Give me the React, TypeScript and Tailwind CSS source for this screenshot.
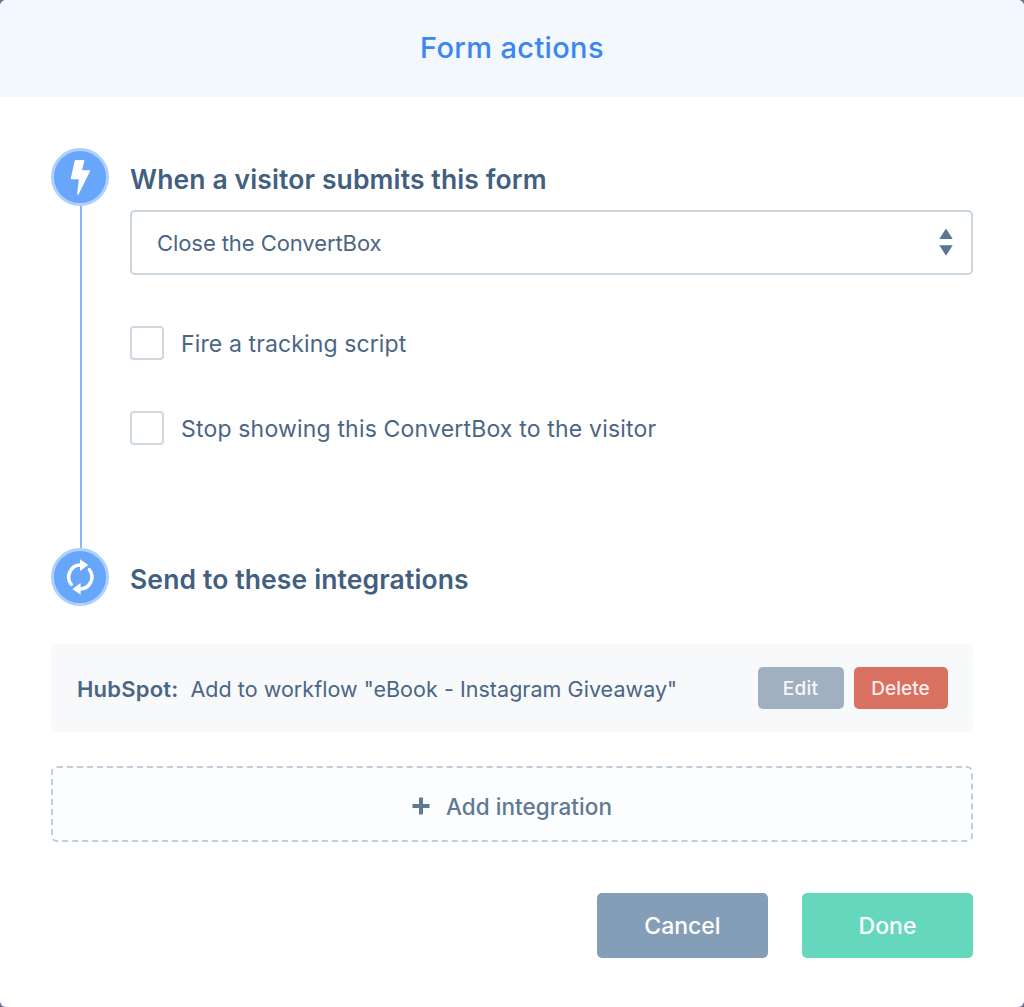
import React, { useState } from 'react';

interface StepHeadingProps {
  icon: React.ReactNode;
  title: string;
}

interface CheckboxRowProps {
  label: string;
  className: string;
}

const BoltIcon = () => (
  <svg className="h-full w-full" viewBox="0 0 58 58" fill="white">
    <path
      d="M24.4 12.7h8.3l-2.5 10.2h8.2L26.9 46.1l1.6-15.5h-8.1z"
      stroke="white"
      strokeWidth="1.4"
      strokeLinejoin="round"
    />
  </svg>
);

const SyncIcon = () => (
  <svg className="h-full w-full" viewBox="0 0 58 58">
    {[0, 180].map((angle) => (
      <g key={angle} transform={`rotate(${angle} 29.3 29)`}>
        <path
          d="M20.2 36.3A11.9 11.9 0 0 1 29.9 17.1"
          fill="none"
          stroke="white"
          strokeWidth="3.5"
          strokeLinecap="round"
        />
        <path d="M29 11.2L37.2 17.1L29 23.1z" fill="white" />
      </g>
    ))}
  </svg>
);

const StepHeading: React.FC<StepHeadingProps> = ({ icon, title }) => (
  <div className="flex h-[58px] items-center gap-[21px]">
    <div className="relative h-[58px] w-[58px] shrink-0 rounded-full border-[3px] border-[#b0d0fb] bg-[#67a6fa]">
      <div className="absolute -inset-[3px]">{icon}</div>
    </div>
    <h2 className="pt-1 text-[26.5px] font-semibold leading-8 tracking-[0.12px] text-[#435f80]">
      {title}
    </h2>
  </div>
);

const CheckboxRow: React.FC<CheckboxRowProps> = ({ label, className }) => {
  const [checked, setChecked] = useState(false);

  return (
    <label className="flex h-[34px] items-center gap-[17px]">
      <input
        type="checkbox"
        className="h-[34px] w-[34px] appearance-none rounded-[4px] border-2 border-[#cfd8e1] bg-white checked:bg-[#67a6fa]"
        checked={checked}
        onChange={() => setChecked((c) => !c)}
      />
      <span className={className}>{label}</span>
    </label>
  );
};

const App: React.FC = () => {
  return (
    <div className="h-[1007px] w-[1024px] bg-[#5b7293] font-['Inter',sans-serif]">
      <div className="h-full overflow-hidden rounded-[6px] bg-white">
        <header className="flex h-[97px] items-center justify-center bg-[#f3f7fe] pb-px">
          <h1 className="text-[29px] font-medium leading-9 tracking-[0.35px] text-[#3b86f0]">
            Form actions
          </h1>
        </header>

        <main className="flex flex-col px-[51px] pt-[51px]">
          {/* Submit behaviour */}
          <section className="flex h-[400px] flex-col">
            <StepHeading icon={<BoltIcon />} title="When a visitor submits this form" />
            <div className="flex flex-1">
              <div className="ml-[29px] w-[2px] bg-[#85b7fb]" />
              <div className="ml-12 flex-1 pt-1">
                <button className="flex h-[65px] w-full items-center justify-between rounded-[5px] border-2 border-[#cbd6df] pl-[25px] pr-[18.5px] text-[22px] tracking-[-0.08px] text-[#4b6685]">
                  <span className="pt-[2px]">Close the ConvertBox</span>
                  <svg className="mb-px h-7 w-[14px]" viewBox="0 0 14 28" fill="#5c7593">
                    <path d="M7 0.5L13.7 11H0.3zM0.3 17.2h13.4L7 27.7z" />
                  </svg>
                </button>
                <div className="flex flex-col gap-[51px] pt-[51px] text-[23px] text-[#4b6685]">
                  <CheckboxRow label="Fire a tracking script" className="pt-[2px] tracking-[0.12px]" />
                  <CheckboxRow
                    label="Stop showing this ConvertBox to the visitor"
                    className="pt-[2px] tracking-[0.18px]"
                  />
                </div>
              </div>
            </div>
          </section>

          {/* Integrations */}
          <section>
            <StepHeading icon={<SyncIcon />} title="Send to these integrations" />
            <div className="mt-[38px] flex h-[88px] items-center rounded-[6px] bg-[#f7f9fb] pl-[26px] pr-[25.5px] text-[#4b6685]">
              <span className="pt-[2px] text-[22px] font-semibold tracking-[0.2px]">HubSpot:</span>
              <span className="ml-3 pt-[2px] text-[21.5px] tracking-[0.04px]">
                Add to workflow "eBook - Instagram Giveaway"
              </span>
              <button className="ml-auto h-[42px] w-[86px] rounded-[5px] bg-[#a1b0c0] pt-[2px] text-[19px] font-medium tracking-[0.3px] text-[#f5f8fb]">
                Edit
              </button>
              <button className="ml-[10px] h-[42px] w-[94px] rounded-[5px] bg-[#d8715f] pt-[2px] text-[19px] font-medium text-[#fdeeed]">
                Delete
              </button>
            </div>
            <button className="mt-[34px] flex h-[76px] w-full items-center justify-center gap-4 rounded-[6px] border-2 border-dashed border-[#c1cdd9] bg-[#fcfdff] pt-[5px] text-[22.5px] font-medium text-[#5f7893]">
              <svg className="mb-px h-[18px] w-[18px]" viewBox="0 0 18 18" fill="#5f7893">
                <path d="M7 0.5h4v6.5h6.5v4H11v6.5H7V11H0.5V7H7z" />
              </svg>
              <span className="tracking-[0.05px]">Add integration</span>
            </button>
          </section>

          <footer className="mt-[50.5px] flex justify-end gap-[34px] text-[23px] font-medium text-white">
            <button className="h-[65px] w-[171px] rounded-[5px] bg-[#849eb7] pt-[2px]">Cancel</button>
            <button className="h-[65px] w-[171px] rounded-[5px] bg-[#65d7bd] pt-[2px]">Done</button>
          </footer>
        </main>
      </div>
    </div>
  );
};

export default App;
